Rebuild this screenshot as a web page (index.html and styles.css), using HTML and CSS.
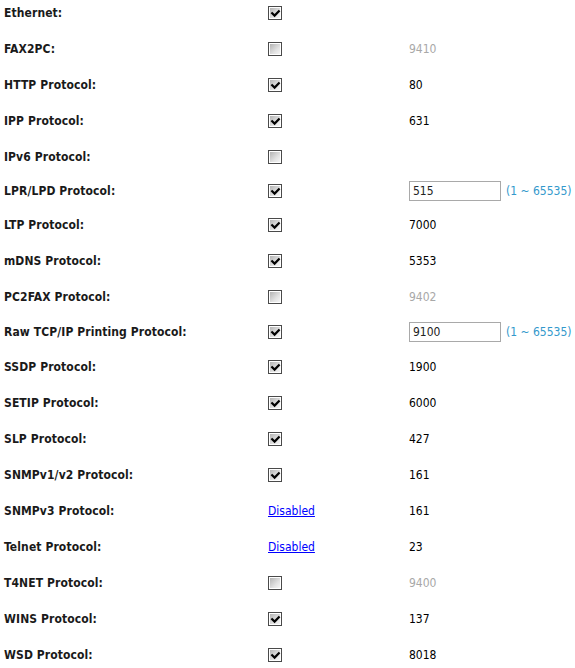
FILE: index.html
```html
<!DOCTYPE html>
<html>
<head>
<meta charset="utf-8">
<link rel="stylesheet" href="styles.css">
</head>
<body>
<div class="list">
  <div class="row first"><span class="label">Ethernet:</span><span class="ctl"><span class="cb on"><svg viewBox="0 0 11 11"><path d="M2.2 5.2 L4.6 7.6 L8.8 3.2"/></svg></span></span><span class="val"></span></div>
  <div class="row"><span class="label">FAX2PC:</span><span class="ctl"><span class="cb"></span></span><span class="val dim">9410</span></div>
  <div class="row"><span class="label">HTTP Protocol:</span><span class="ctl"><span class="cb on"><svg viewBox="0 0 11 11"><path d="M2.2 5.2 L4.6 7.6 L8.8 3.2"/></svg></span></span><span class="val">80</span></div>
  <div class="row"><span class="label">IPP Protocol:</span><span class="ctl"><span class="cb on"><svg viewBox="0 0 11 11"><path d="M2.2 5.2 L4.6 7.6 L8.8 3.2"/></svg></span></span><span class="val">631</span></div>
  <div class="row"><span class="label">IPv6 Protocol:</span><span class="ctl"><span class="cb"></span></span><span class="val"></span></div>
  <div class="row input-row"><span class="label">LPR/LPD Protocol:</span><span class="ctl"><span class="cb on"><svg viewBox="0 0 11 11"><path d="M2.2 5.2 L4.6 7.6 L8.8 3.2"/></svg></span></span><span class="val"><span class="box">515</span><span class="range">(1 ~ 65535)</span></span></div>
  <div class="row"><span class="label">LTP Protocol:</span><span class="ctl"><span class="cb on"><svg viewBox="0 0 11 11"><path d="M2.2 5.2 L4.6 7.6 L8.8 3.2"/></svg></span></span><span class="val">7000</span></div>
  <div class="row"><span class="label">mDNS Protocol:</span><span class="ctl"><span class="cb on"><svg viewBox="0 0 11 11"><path d="M2.2 5.2 L4.6 7.6 L8.8 3.2"/></svg></span></span><span class="val">5353</span></div>
  <div class="row"><span class="label">PC2FAX Protocol:</span><span class="ctl"><span class="cb"></span></span><span class="val dim">9402</span></div>
  <div class="row input-row tall"><span class="label">Raw TCP/IP Printing Protocol:</span><span class="ctl"><span class="cb on"><svg viewBox="0 0 11 11"><path d="M2.2 5.2 L4.6 7.6 L8.8 3.2"/></svg></span></span><span class="val"><span class="box">9100</span><span class="range">(1 ~ 65535)</span></span></div>
  <div class="row"><span class="label">SSDP Protocol:</span><span class="ctl"><span class="cb on"><svg viewBox="0 0 11 11"><path d="M2.2 5.2 L4.6 7.6 L8.8 3.2"/></svg></span></span><span class="val">1900</span></div>
  <div class="row"><span class="label">SETIP Protocol:</span><span class="ctl"><span class="cb on"><svg viewBox="0 0 11 11"><path d="M2.2 5.2 L4.6 7.6 L8.8 3.2"/></svg></span></span><span class="val">6000</span></div>
  <div class="row"><span class="label">SLP Protocol:</span><span class="ctl"><span class="cb on"><svg viewBox="0 0 11 11"><path d="M2.2 5.2 L4.6 7.6 L8.8 3.2"/></svg></span></span><span class="val">427</span></div>
  <div class="row"><span class="label">SNMPv1/v2 Protocol:</span><span class="ctl"><span class="cb on"><svg viewBox="0 0 11 11"><path d="M2.2 5.2 L4.6 7.6 L8.8 3.2"/></svg></span></span><span class="val">161</span></div>
  <div class="row"><span class="label">SNMPv3 Protocol:</span><span class="ctl"><a class="link" href="#">Disabled</a></span><span class="val">161</span></div>
  <div class="row"><span class="label">Telnet Protocol:</span><span class="ctl"><a class="link" href="#">Disabled</a></span><span class="val">23</span></div>
  <div class="row"><span class="label">T4NET Protocol:</span><span class="ctl"><span class="cb"></span></span><span class="val dim">9400</span></div>
  <div class="row"><span class="label">WINS Protocol:</span><span class="ctl"><span class="cb on"><svg viewBox="0 0 11 11"><path d="M2.2 5.2 L4.6 7.6 L8.8 3.2"/></svg></span></span><span class="val">137</span></div>
  <div class="row"><span class="label">WSD Protocol:</span><span class="ctl"><span class="cb on"><svg viewBox="0 0 11 11"><path d="M2.2 5.2 L4.6 7.6 L8.8 3.2"/></svg></span></span><span class="val">8018</span></div>
</div>
</body>
</html>
```
FILE: styles.css
```css
html, body {
  margin: 0;
  padding: 0;
  background: #fff;
}
body {
  font-family: "DejaVu Sans Condensed", "DejaVu Sans", sans-serif;
  font-size: 12px;
  color: #000;
}
.list {
  display: flex;
  flex-direction: column;
}
.row {
  display: grid;
  grid-template-columns: 264px 141px 1fr;
  align-items: center;
  height: 36px;
  padding-left: 4px;
  box-sizing: border-box;
}
.row.first {
  height: 31px;
  padding-bottom: 5px;
}
.row.input-row {
  height: 32px;
}
.row.input-row.tall {
  height: 34px;
}
.label {
  font-weight: bold;
  color: #1a1a1a;
  letter-spacing: 0.1px;
}
.ctl {
  display: flex;
  align-items: center;
}
.cb {
  width: 14px;
  height: 14px;
  box-sizing: border-box;
  border: 1px solid #4a4a4a;
  box-shadow: inset 0 0 0 1px #fff;
  background: linear-gradient(135deg, #acacac 0%, #e2e2e2 60%, #fafafa 100%);
  display: flex;
  align-items: center;
  justify-content: center;
}
.cb svg {
  width: 11px;
  height: 11px;
  display: block;
}
.cb svg path {
  fill: none;
  stroke: #000;
  stroke-width: 2.2;
  stroke-linecap: square;
}
.link {
  color: #0000ff;
  text-decoration: underline;
}
.val {
  display: flex;
  align-items: center;
  padding-left: 0;
}
.dim {
  color: #a8a8a8;
}
.box {
  width: 92px;
  height: 20px;
  box-sizing: border-box;
  border: 1px solid #a9a9a9;
  padding-left: 3px;
  display: flex;
  align-items: center;
  color: #222;
}
.range {
  color: #3399cc;
  margin-left: 5px;
}
```
